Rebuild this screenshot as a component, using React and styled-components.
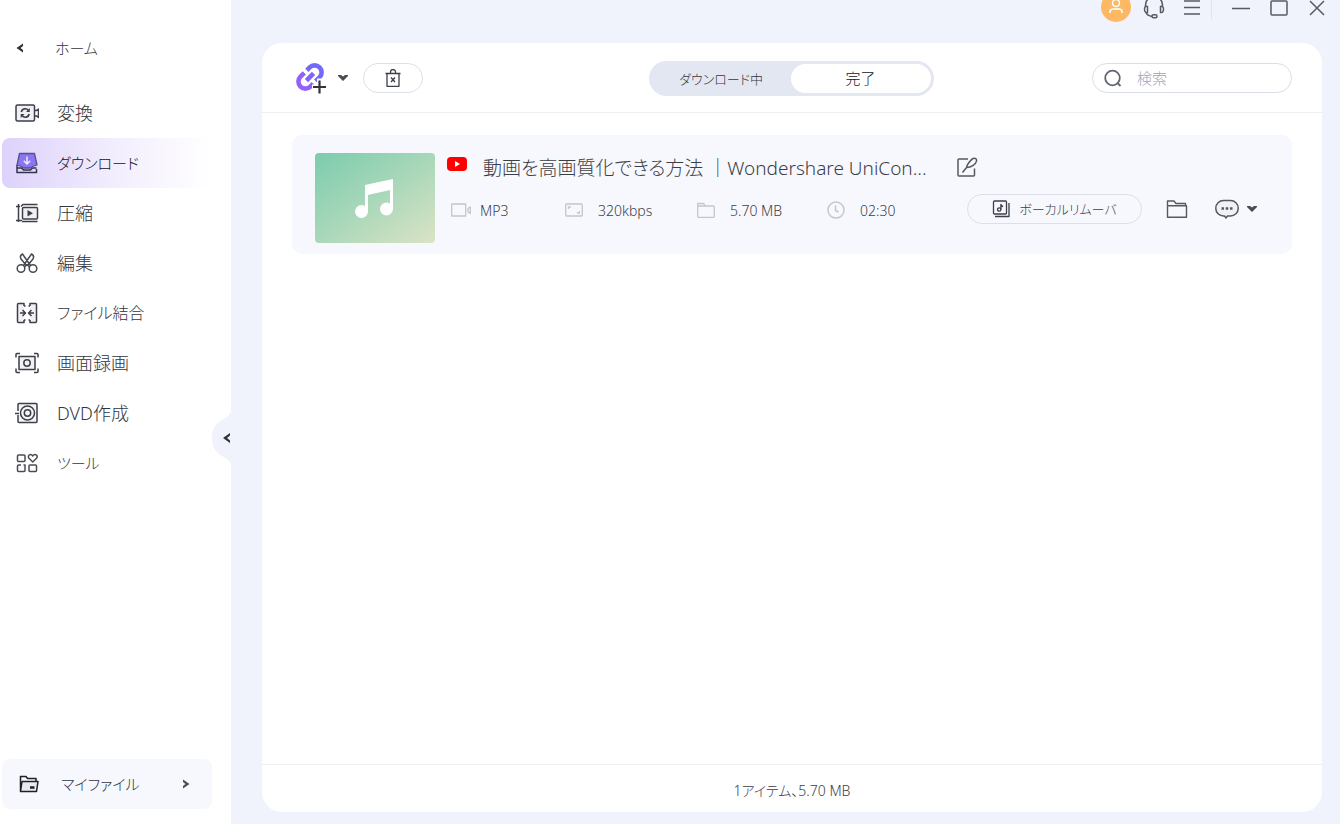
import React from 'react'
import styled, { createGlobalStyle } from 'styled-components'

const GlobalStyle = createGlobalStyle`
  * {
    box-sizing: border-box;
  }

  body {
    margin: 0;
    overflow: hidden;
    background: #f0f3fb;
    color: #3c3e46;
    font-family: 'Noto Sans', 'Noto Sans CJK JP', sans-serif;
    font-size: 14px;
    font-weight: 300;
    font-feature-settings: 'palt';
  }

  button,
  input {
    font: inherit;
    font-feature-settings: inherit;
    color: inherit;
  }

  button {
    padding: 0;
    border: 0;
    background: none;
    cursor: pointer;
  }

  svg {
    display: block;
    flex: none;
  }
`

const Window = styled.div`
  display: flex;
  height: 100vh;
`

const Sidebar = styled.aside`
  position: relative;
  display: flex;
  flex-direction: column;
  flex: 0 0 231px;
  padding: 23px 19px 15px 2px;
  background: #fff;
`

const SideButton = styled.button`
  display: flex;
  align-items: center;
  width: 100%;
  height: 50px;
  padding-left: ${({ $inset }) => $inset || '13px'};
  gap: ${({ $gap }) => $gap || '18px'};
  border-radius: 8px;
  font-size: ${({ $text }) => $text || '18px'};
  line-height: 24px;
  text-align: left;
  white-space: nowrap;
  color: ${({ $active }) => ($active ? '#14121f' : '#34363e')};
  background: ${({ $active }) =>
    $active ? 'linear-gradient(90deg, #ddd2fb 0%, #f3eefe 55%, #fff 100%)' : 'none'};
`

const Label = styled.span`
  flex: 1;
`

const Nav = styled.nav`
  flex: 1;
  margin-top: 15px;
`

const MyFiles = styled(SideButton)`
  padding-right: 22px;
  background: #f7f8fd;
`

const Collapse = styled.button`
  position: absolute;
  top: 411px;
  right: 0;
  width: 19px;
  height: 54px;
`

const Main = styled.main`
  display: flex;
  flex-direction: column;
  flex: 1;
  min-width: 0;
  padding: 0 18px 12px 31px;
`

const TitleBar = styled.header`
  display: flex;
  align-items: center;
  justify-content: flex-end;
  height: 30px;
  margin: -8px -14px 21px 0;
`

const BarButton = styled.button`
  display: grid;
  place-items: center;
  width: 38px;
  height: 30px;
`

const Divider = styled.span`
  width: 1px;
  height: 24px;
  margin-right: 10px;
  background: #e0e3ec;
`

const Panel = styled.section`
  display: flex;
  flex-direction: column;
  flex: 1;
  min-height: 0;
  border-radius: 20px;
  background: #fff;
`

const Toolbar = styled.div`
  display: grid;
  grid-template-columns: 1fr auto 1fr;
  align-items: center;
  height: 70px;
  padding: 1px 30px 0 28px;
  border-bottom: 1px solid #eeeff3;
`

const ToolGroup = styled.div`
  display: flex;
  align-items: center;
  padding-left: 5px;
`

const AddButton = styled.button`
  display: flex;
  align-items: center;
  gap: 11px;
`

const PillButton = styled.button`
  display: flex;
  align-items: center;
  justify-content: center;
  gap: 9px;
  width: ${({ $width }) => $width};
  height: 30px;
  border: 1px solid #dcdfe8;
  border-radius: 15px;
  font-size: 13px;
  line-height: 18px;
  white-space: nowrap;
`

const DeleteButton = styled(PillButton)`
  margin-left: 15px;
`

const Tabs = styled.div`
  display: flex;
  padding: 3px;
  border-radius: 18px;
  background: #e3e7f1;
`

const Tab = styled.button`
  width: 139px;
  height: 29px;
  border-radius: 15px;
  font-size: 13px;
  color: #34363e;

  &[aria-selected='true'] {
    width: 140px;
    font-size: 15px;
    line-height: 20px;
    color: #14151a;
    background: #fff;
  }
`

const Search = styled.label`
  display: flex;
  align-items: center;
  justify-self: end;
  gap: 15px;
  width: 200px;
  height: 30px;
  padding: 0 11px;
  border: 1px solid #dcdee5;
  border-radius: 15px;

  input {
    flex: 1;
    min-width: 0;
    padding: 0;
    border: 0;
    outline: 0;
    background: none;
    font-size: 15px;
  }

  input::placeholder {
    color: #a3a4b4;
    opacity: 1;
  }
`

const List = styled.div`
  flex: 1;
  min-height: 0;
  padding: 22px 30px;
`

const Card = styled.article`
  display: flex;
  gap: 12px;
  padding: 18px 34px 11px 23px;
  border-radius: 10px;
  background: #f7f8fd;
`

const Thumb = styled.div`
  display: grid;
  place-items: center;
  flex: none;
  width: 120px;
  height: 90px;
  border-radius: 4px;
  background: linear-gradient(145deg, #7bccad 0%, #a9d7b9 50%, #dbe3c5 100%);
`

const Details = styled.div`
  flex: 1;
  min-width: 0;
`

const TitleRow = styled.div`
  display: flex;
  align-items: center;
  height: 30px;
`

const SourceBadge = styled.span`
  align-self: flex-start;
  margin: 3px 16px 0 0;
`

const Title = styled.h2`
  width: 473px;
  margin: 0;
  overflow: hidden;
  font-size: 19px;
  font-weight: inherit;
  line-height: 30px;
  white-space: nowrap;
`

const InfoRow = styled.div`
  display: flex;
  align-items: center;
  height: 30px;
  margin-top: 11px;
  padding-left: 4px;
`

const Meta = styled.span`
  display: flex;
  align-items: center;
  gap: ${({ $gap }) => $gap};
  width: ${({ $width }) => $width};
  padding-top: 2px;
  white-space: nowrap;
`

const IconButton = styled.button`
  display: flex;
  align-items: center;
  gap: 8px;
  margin-left: ${({ $space }) => $space || '0'};
`

const Footer = styled.footer`
  height: 48px;
  border-top: 1px solid #eeeff3;
  line-height: 51px;
  text-align: center;
`

const Icon = ({ size = 24, w, h, color = '#3d3f49', stroke = 1.5, children }) => (
  <svg
    width={w || size}
    height={h || size}
    viewBox={`0 0 ${w || size} ${h || size}`}
    fill="none"
    stroke={color}
    strokeWidth={stroke}
    strokeLinejoin="round"
    aria-hidden="true"
  >
    {children}
  </svg>
)

const LeftArrow = () => (
  <Icon w={8} h={10}>
    <path d="M7 .5 .5 5 7 9.500V7L4.500 5 7 3z" fill="#303238" stroke="none" />
  </Icon>
)

const RightArrow = () => (
  <Icon w={8} h={10}>
    <path d="M1 .5 7.500 5 1 9.500V7L3.500 5 1 3z" fill="#4a4c54" stroke="none" />
  </Icon>
)

const Caret = () => (
  <Icon w={10} h={8}>
    <path d="M0 1h3l2 1.500L7 1h3v1L5 7 0 2z" fill="#4a4c54" stroke="none" />
  </Icon>
)

const ConvertIcon = () => (
  <Icon>
    <rect x="1" y="4" width="18.500" height="16" rx="1.500" fill="#f0f0f5" />
    <path d="M20 9.500h1.500L24 8v8.500l-2.500-1.500H20M23.500 8v9" />
    <path d="M6.300 11a4 4 0 0 1 7-1.800M14.200 13a4 4 0 0 1-7 1.800" strokeWidth="1.700" />
    <path d="M14.800 7v4H11zM5.700 17v-4h3.800z" fill="#3d3f49" stroke="none" />
  </Icon>
)

const DownloadIcon = () => (
  <Icon>
    <path d="M2 14v7.500h19.500V18M2 17h4.500l2 2h7l2-2H21.500" stroke="#35324d" />
    <path
      d="M4.500 2.500h15l2.500 11.500-4.500 1.500-2 1.500h-7l-2-1.500L2 14z"
      fill="#8a76f2"
      stroke="#57508a"
      strokeWidth="1.300"
    />
    <path d="M12 5.500v7M8.800 9.800 12 13l3.200-3.200" stroke="#efe8ff" />
  </Icon>
)

const CompressIcon = () => (
  <Icon>
    <path d="M3.500 3v18M1 5.500h4M1 19.500h6M6 5.500l2-2h14.500M7 20.500h15.500" />
    <rect x="7.500" y="6.500" width="15" height="11.500" rx="1" fill="#f0f0f5" />
    <path d="M12.500 9v6.500l5.500-3.200z" fill="#3d3f49" stroke="none" />
  </Icon>
)

const EditIcon = () => (
  <Icon color="#484a52">
    <circle cx="6" cy="17.500" r="3.800" />
    <circle cx="18" cy="17.500" r="3.800" />
    <path d="M8.500 14.500 16.500 3c2 1 2.500 3 1.500 5l-5 6M15.500 14.500 7.500 3c-2 1-2.500 3-1.500 5l5 6M9.500 16l2.500-2.500 2.500 2.500" />
  </Icon>
)

const MergeIcon = () => (
  <Icon>
    <path
      d="M9 5V2.500H3.500a1 1 0 0 0-1 1v17a1 1 0 0 0 1 1H9V19M15 5V2.500h5.500a1 1 0 0 1 1 1v17a1 1 0 0 1-1 1H15V19"
      fill="#f0f0f5"
    />
    <path d="M9 5h1.500M15 5h-1.500M9 19h1.500M15 19h-1.500" />
    <path d="M5 12h5M7.500 9l3 3-3 3M19 12h-5M16.500 9l-3 3 3 3" />
  </Icon>
)

const RecordIcon = () => (
  <Icon>
    <path d="M1 6.500v-3a1 1 0 0 1 1-1h3M19 2.500h3a1 1 0 0 1 1 1v3M23 17.500v3a1 1 0 0 1-1 1h-3M5 21.500H2a1 1 0 0 1-1-1v-3" />
    <rect x="4" y="5.500" width="16" height="13" fill="#f0f0f5" />
    <circle cx="12" cy="12" r="3.200" />
  </Icon>
)

const DvdIcon = () => (
  <Icon>
    <path
      d="M3 10V3.500a1 1 0 0 1 1-1h17a1 1 0 0 1 1 1v17a1 1 0 0 1-1 1H4a1 1 0 0 1-1-1V14M0 12.500h4"
      fill="#f6f6f9"
    />
    <circle cx="12.500" cy="12" r="7" />
    <circle cx="12.500" cy="12" r="3.200" />
  </Icon>
)

const ToolsIcon = () => (
  <Icon color="#4a4c54">
    <rect x="2.500" y="4" width="7.500" height="6.500" rx="1" />
    <rect x="14" y="14" width="7.500" height="6.500" rx="1" />
    <path d="M6 14H3.500a1 1 0 0 0-1 1v4.500a1 1 0 0 0 1 1H9a1 1 0 0 0 1-1V14H8.500" />
    <path d="m17.750 11-4-4c-1.500-2.500 2-5 4-2 2-3 5.500-.5 4 2z" />
  </Icon>
)

const MyFilesIcon = () => (
  <Icon w={20} h={20} stroke={1.5} color="#1f2026">
    <path d="M1.500 17V2.500H7l1.500 2H17V7" />
    <path d="M1.500 17.500 3 7.500h16l-1.500 10z" fill="#e9eaf1" />
    <path d="M11 13.500h4.500" strokeWidth="2.500" />
  </Icon>
)

// two chain halves wrapped round a short middle bar
const LinkPlusIcon = () => (
  <Icon w={32} h={32} stroke={4.6}>
    <g transform="rotate(-45 15 15)">
      <path d="M14 8H8.500a7 7 0 0 0 0 14h4" stroke="#9460fb" />
      <path d="M16 22h5.500a7 7 0 0 0 0-14h-4" stroke="#7268fb" />
      <path d="M10 15h10" stroke="#8262fb" />
    </g>
    <path d="M24.500 16.500v15M17 25h15" stroke="#fff" strokeWidth="5" />
    <path d="M24.500 18.500v13M18 25h13" stroke="#33343b" strokeWidth="2.200" />
  </Icon>
)

const TrashIcon = () => (
  <Icon w={16} h={18} stroke={1.3}>
    <path d="M.5 4.500h15M2 4.500v12.800h12V4.500M5.500 4.500V3a2.500 2.500 0 0 1 5 0v1.500M6 8.500l4 4.500M10 8.500 6 13" />
  </Icon>
)

const SearchIcon = () => (
  <Icon w={18} h={18} stroke={1.8} color="#626575">
    <circle cx="8.500" cy="9" r="7.300" />
    <path d="m13.500 14 3 3" />
  </Icon>
)

const UserIcon = () => (
  <svg width="30" height="30" viewBox="0 0 30 30" fill="none" stroke="#fff" strokeWidth="1.500" aria-hidden="true">
    <circle cx="15" cy="15" r="15" fill="#fcb863" stroke="none" />
    <circle cx="15" cy="11" r="3.500" />
    <path d="M9 21v-1a3 3 0 0 1 3-3h6a3 3 0 0 1 3 3v1" />
  </svg>
)

const SupportIcon = () => (
  <Icon color="#575a66">
    <path d="M3.500 11.500V10a8.500 8.500 0 0 1 17 0v1.500M4 17.500c1 2.500 3 3.500 6 4" />
    <path d="M5.500 11.500c-2-.5-3 .5-3 2.500 0 2.500 1 4 3 3.500zM18.500 11.500c2-.5 3 .5 3 2.500 0 2.500-1 4-3 3.500z" />
    <rect x="10" y="19.800" width="5" height="3" rx="1.500" />
  </Icon>
)

const NoteIcon = () => (
  <Icon w={40} h={42}>
    <path d="M10 8 38 2v30h-3V13l-22 5v17h-3z" fill="#fff" stroke="none" />
    <circle cx="6.500" cy="34.500" r="6.500" fill="#fff" stroke="none" />
    <circle cx="31.500" cy="32" r="6.500" fill="#fff" stroke="none" />
  </Icon>
)

const YoutubeIcon = () => (
  <Icon w={20} h={16}>
    <rect y="1" width="20" height="14" rx="4" fill="#fe0000" stroke="none" />
    <path d="M8 5v6l5-3z" fill="#fff" stroke="none" />
  </Icon>
)

const RenameIcon = () => (
  <Icon w={22} h={22} stroke={1.5} color="#555862">
    <path d="M12 2H3a1 1 0 0 0-1 1v15a1 1 0 0 0 1 1h14.500a1 1 0 0 0 1-1v-6.500" />
    <path d="M6.500 15.500 11 10M10.500 10.500c0-2 4-7.500 6.500-9 2-1 4 .5 3.500 2.500-.5 3-5 6.500-10 6.500z" />
  </Icon>
)

const META = '#c3c5cf'

const VideoIcon = () => (
  <Icon w={20} h={18} color={META} stroke={1.3}>
    <rect x=".7" y="3" width="14" height="12" />
    <path d="M17 7.500 19.300 6v6.500L17 11z" />
  </Icon>
)

const RateIcon = () => (
  <Icon w={18} h={18} color={META} stroke={1.3}>
    <rect x=".7" y="3" width="16.600" height="12" rx="1" />
    <path d="M3.500 8V6H6M14.500 10v2H12" />
  </Icon>
)

const SizeIcon = () => (
  <Icon w={18} h={18} color={META} stroke={1.3}>
    <path d="M.7 5V2.500h6L8 5M.7 5h15.600a1 1 0 0 1 1 1v9.300a1 1 0 0 1-1 1H1.700a1 1 0 0 1-1-1z" />
  </Icon>
)

const ClockIcon = () => (
  <Icon w={18} h={18} color={META} stroke={1.5}>
    <circle cx="9" cy="9" r="8" />
    <path d="M8.500 4.500V9.500l3 1.500" />
  </Icon>
)

const VocalIcon = () => (
  <Icon w={18} h={18} stroke={1.3}>
    <rect x="1.500" y="1" width="13" height="13" rx="1" />
    <path d="M17 3v13.500H3" />
    <circle cx="7.200" cy="9.500" r="1.700" />
    <path d="M8.900 9.500V4.500c.3 1.300 1 1.800 2.200 2" />
  </Icon>
)

const FolderIcon = () => (
  <Icon w={22} h={20} stroke={1.4} color="#555862">
    <path d="M1.500 6V2h6.500l2 2.500h9.500V6M1.500 6.700h19v11.500h-19z" />
  </Icon>
)

const MoreIcon = () => (
  <Icon w={24} h={20} stroke={1.5} color="#555862">
    <path d="M8.500 1.500h7a7.500 7.500 0 0 1 0 15.500h-3L11 19l-1.500-2h-1a7.500 7.500 0 0 1 0-15.500z" fill="#f0f0f5" />
    <path d="M6.500 9.500H9M10.700 9.500h2.600M15 9.500h2.500" strokeWidth="2.400" />
  </Icon>
)

const navItems = [
  { label: '変換', icon: ConvertIcon },
  { label: 'ダウンロード', icon: DownloadIcon, active: true, text: '15px' },
  { label: '圧縮', icon: CompressIcon },
  { label: '編集', icon: EditIcon },
  { label: 'ファイル結合', icon: MergeIcon, text: '16px' },
  { label: '画面録画', icon: RecordIcon },
  { label: 'DVD作成', icon: DvdIcon },
  { label: 'ツール', icon: ToolsIcon, text: '15px' },
]

const metaItems = [
  { text: 'MP3', icon: VideoIcon, width: '114px', gap: '9px' },
  { text: '320kbps', icon: RateIcon, width: '132px', gap: '15px' },
  { text: '5.70 MB', icon: SizeIcon, width: '130px', gap: '15px' },
  { text: '02:30', icon: ClockIcon, width: '140px', gap: '15px' },
]

const App = () => {
  return (
    <>
      <GlobalStyle />
      <Window>
        <Sidebar>
          <SideButton $text="15px" $gap="31px" $inset="14px">
            <LeftArrow />
            <Label>ホーム</Label>
          </SideButton>
          <Nav>
            {navItems.map(({ label, icon: ItemIcon, active, text }) => (
              <SideButton key={label} $active={active} $text={text}>
                <ItemIcon />
                <Label>{label}</Label>
              </SideButton>
            ))}
          </Nav>
          <MyFiles $text="15px" $gap="22px" $inset="17px">
            <MyFilesIcon />
            <Label>マイファイル</Label>
            <RightArrow />
          </MyFiles>
          <Collapse aria-label="サイドバーを閉じる">
            <svg width="19" height="54" viewBox="0 0 19 54" aria-hidden="true">
              <path d="M19 0C18 6 12 7 7 11 2 15 0 20 0 27s2 12 7 16c5 4 11 5 12 11z" fill="#f0f3fb" />
              <path d="M18 22l-7 5 7 5v-2.500L15 27l3-2.500z" fill="#303238" />
            </svg>
          </Collapse>
        </Sidebar>

        <Main>
          <TitleBar>
            <BarButton aria-label="アカウント">
              <UserIcon />
            </BarButton>
            <BarButton aria-label="サポート">
              <SupportIcon />
            </BarButton>
            <BarButton aria-label="メニュー">
              <Icon w={18} h={18} color="#575a66">
                <path d="M1 3h16M1 9.500h16M1 16h16" />
              </Icon>
            </BarButton>
            <Divider />
            <BarButton aria-label="最小化">
              <Icon w={18} h={18} color="#575a66">
                <path d="M0 10.500h18" />
              </Icon>
            </BarButton>
            <BarButton aria-label="最大化">
              <Icon w={18} h={18} color="#575a66">
                <rect x="1" y="3" width="16" height="14" rx="1" />
              </Icon>
            </BarButton>
            <BarButton aria-label="閉じる">
              <Icon w={18} h={18} color="#575a66">
                <path d="m2 3 14 14M16 3 2 17" />
              </Icon>
            </BarButton>
          </TitleBar>

          <Panel>
            <Toolbar>
              <ToolGroup>
                <AddButton aria-label="リンクを追加">
                  <LinkPlusIcon />
                  <Caret />
                </AddButton>
                <DeleteButton $width="60px" aria-label="削除">
                  <TrashIcon />
                </DeleteButton>
              </ToolGroup>
              <Tabs role="tablist">
                <Tab role="tab" aria-selected="false">
                  ダウンロード中
                </Tab>
                <Tab role="tab" aria-selected="true">
                  完了
                </Tab>
              </Tabs>
              <Search>
                <SearchIcon />
                <input type="text" placeholder="検索" aria-label="検索" />
              </Search>
            </Toolbar>

            <List>
              <Card>
                <Thumb>
                  <NoteIcon />
                </Thumb>
                <Details>
                  <TitleRow>
                    <SourceBadge>
                      <YoutubeIcon />
                    </SourceBadge>
                    <Title>動画を高画質化できる方法 ｜Wondershare UniCon...</Title>
                    <IconButton aria-label="名前を変更">
                      <RenameIcon />
                    </IconButton>
                  </TitleRow>
                  <InfoRow>
                    {metaItems.map(({ text, icon: MetaIcon, width, gap }) => (
                      <Meta key={text} $width={width} $gap={gap}>
                        <MetaIcon />
                        {text}
                      </Meta>
                    ))}
                    <PillButton $width="175px">
                      <VocalIcon />
                      ボーカルリムーバ
                    </PillButton>
                    <IconButton $space="24px" aria-label="フォルダーを開く">
                      <FolderIcon />
                    </IconButton>
                    <IconButton $space="27px" aria-label="その他">
                      <MoreIcon />
                      <Caret />
                    </IconButton>
                  </InfoRow>
                </Details>
              </Card>
            </List>

            <Footer>1アイテム、5.70 MB</Footer>
          </Panel>
        </Main>
      </Window>
    </>
  )
}

export default App
